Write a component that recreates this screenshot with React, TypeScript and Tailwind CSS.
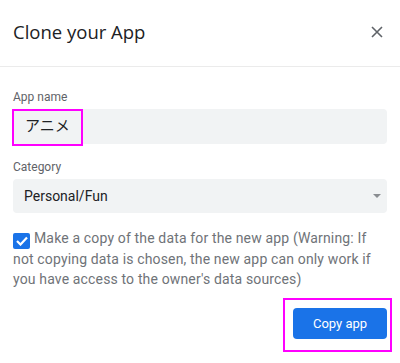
import React from 'react';

const CloneDialog: React.FC = () => {
  return (
    <div className="relative w-[400px] h-[363px] bg-white font-['Roboto','Noto_Sans_CJK_JP',sans-serif]">
      <div className="flex h-[67px] items-center justify-between border-b border-[#ebebeb] pl-[13px] pr-[17px]">
        <h1 className="font-['Open_Sans',sans-serif] text-[18.5px] text-[#202124] font-normal leading-none pb-[1px]">Clone your App</h1>
        <button className="flex h-[12px] w-[12px] items-center justify-center -mt-[3px]">
          <svg width="12" height="12" viewBox="0 0 12 12" fill="none" stroke="#5f6368" strokeWidth="1.6">
            <path d="M1 1L11 11M11 1L1 11" />
          </svg>
        </button>
      </div>

      <div className="px-[13px] pt-[22px]">
        <label className="block text-[12px] leading-4 text-[#5f6368]">App name</label>
        <div className="mt-[4px] flex h-[35px] items-center rounded-[4px] bg-[#f1f3f4] pl-[12px] text-[15px] text-[#202124]">
          アニメ
        </div>

        <label className="mt-[15px] block text-[12px] leading-4 text-[#5f6368]">Category</label>
        <div className="mt-[4px] flex h-[34px] items-center justify-between rounded-[4px] bg-[#f1f3f4] pl-[11px] pr-[6px] text-[14px] text-[#202124]">
          <span>Personal/Fun</span>
          <svg width="8" height="4" viewBox="0 0 8 4" fill="#8a8d91">
            <path d="M0 0h8L4 4z" />
          </svg>
        </div>

        <p className="mt-[15px] text-[14px] leading-5 tracking-[0.15px] text-[#6f7378]">
          <span className="mr-[4px] inline-flex h-[16px] w-[17px] items-center justify-center rounded-[2px] bg-[#1a73e8] align-[-3px]">
            <svg width="12" height="10" viewBox="0 0 12 10" fill="none" stroke="white" strokeWidth="2.2">
              <path d="M1 5l3.5 3.5L11 1.5" />
            </svg>
          </span>
          Make a copy of the data for the new app (Warning: If not copying data is chosen, the new app can only work if you have access to the owner's data sources)
        </p>

        <div className="mt-[19px] flex justify-end">
          <button className="h-[31px] w-[94px] rounded-[4px] bg-[#1a73e8] text-[13px] text-white">
            Copy app
          </button>
        </div>
      </div>

      <div className="absolute left-[12px] top-[109px] h-[37px] w-[71px] border-2 border-[#ff00ff]" />
      <div className="absolute left-[283px] top-[298px] h-[54px] w-[109px] border-2 border-[#ff00ff]" />
    </div>
  );
};

export default function App() {
  return <CloneDialog />;
}
